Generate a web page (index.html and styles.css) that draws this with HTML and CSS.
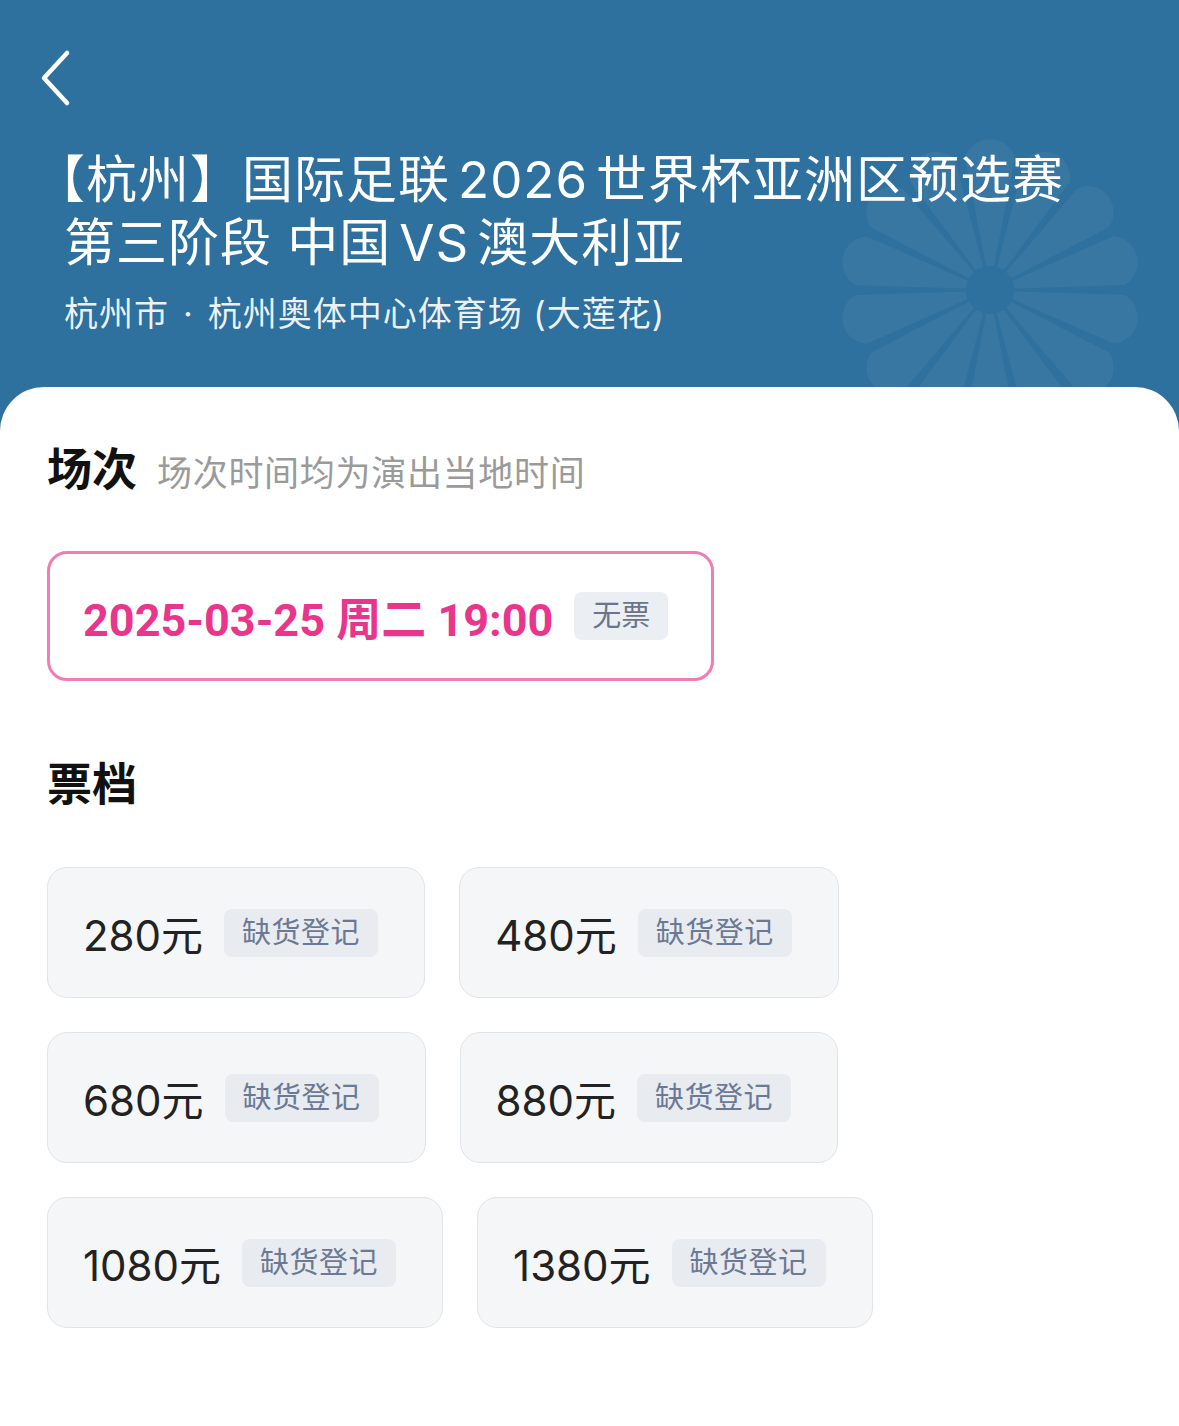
FILE: index.html
```html
<!DOCTYPE html>
<html lang="zh-CN">
<head>
  <meta charset="UTF-8">
  <meta name="viewport" content="width=device-width, initial-scale=1.0">
  <title>杭州 国际足联2026世界杯亚洲区预选赛</title>
  <link rel="stylesheet" href="styles.css">
</head>
<body>
  <div class="page">
    <!-- Top banner with event name -->
    <header class="hero">
      <svg class="lotus" width="380" height="380" viewBox="-190 -190 380 380" aria-hidden="true">
        <g fill="#ffffff" fill-opacity="0.05">
          <path id="petal" d="M-4,-24 L-25,-132 A26,26 0 0 1 25,-132 L4,-24 Z"/>
          <use href="#petal" transform="rotate(25.7)"/>
          <use href="#petal" transform="rotate(51.4)"/>
          <use href="#petal" transform="rotate(77.1)"/>
          <use href="#petal" transform="rotate(102.8)"/>
          <use href="#petal" transform="rotate(128.5)"/>
          <use href="#petal" transform="rotate(154.2)"/>
          <use href="#petal" transform="rotate(180)"/>
          <use href="#petal" transform="rotate(205.7)"/>
          <use href="#petal" transform="rotate(231.4)"/>
          <use href="#petal" transform="rotate(257.1)"/>
          <use href="#petal" transform="rotate(282.8)"/>
          <use href="#petal" transform="rotate(308.5)"/>
          <use href="#petal" transform="rotate(334.2)"/>
        </g>
      </svg>

      <a class="back" href="#" aria-label="返回">
        <svg width="36" height="60" viewBox="0 0 36 60">
          <path d="M31 5 L8 30 L31 55" fill="none" stroke="#ffffff" stroke-width="4.5" stroke-linecap="round" stroke-linejoin="round"/>
        </svg>
      </a>

      <h1 class="title"><span class="open-bracket">【</span>杭州】国际足联<span class="latin">2026</span>世界杯亚洲区预选赛<br>第三阶段 中国<span class="latin">VS</span>澳大利亚</h1>
      <p class="venue">杭州市<span class="dot">·</span>杭州奥体中心体育场 (大莲花)</p>
    </header>

    <main class="sheet">
      <section class="block">
        <div class="block-head">
          <h2>场次</h2>
          <span class="hint">场次时间均为演出当地时间</span>
        </div>
        <div class="session">
          <span class="session-time">2025-03-25 周二 19:00</span>
          <span class="tag">无票</span>
        </div>
      </section>

      <section class="block block-tickets">
        <h2>票档</h2>
        <div class="tickets">
          <div class="ticket"><span class="price">280元</span><span class="tag">缺货登记</span></div>
          <div class="ticket"><span class="price">480元</span><span class="tag">缺货登记</span></div>
          <div class="ticket"><span class="price">680元</span><span class="tag">缺货登记</span></div>
          <div class="ticket"><span class="price">880元</span><span class="tag">缺货登记</span></div>
          <div class="ticket"><span class="price">1080元</span><span class="tag">缺货登记</span></div>
          <div class="ticket"><span class="price">1380元</span><span class="tag">缺货登记</span></div>
        </div>
      </section>
    </main>
  </div>
</body>
</html>
```

FILE: styles.css
```css
/* Ticket page */
body {
  margin: 0;
  font-family: "Inter", "Noto Sans CJK SC", sans-serif;
  background: #ffffff;
  color: #1a1a1a;
}

.page {
  width: 1179px;
  min-height: 1426px;
  background: #ffffff;
  overflow: hidden;
}

/* Banner */
.hero {
  position: relative;
  overflow: hidden;
  background: #2e709e;
  color: #ffffff;
  padding: 48px 40px 95px 64px;
}

.lotus {
  position: absolute;
  left: 800px;
  top: 100px;
}

.back {
  position: relative;
  display: block;
  width: 36px;
  height: 60px;
  margin-left: -28px;
}

.title {
  position: relative;
  margin: 40px 0 0;
  font-size: 51px;
  font-weight: 400;
  line-height: 63px;
  letter-spacing: 1px;
}

.title .latin {
  margin: 0 8px;
}

.open-bracket {
  margin-left: -30px;
}

.venue {
  position: relative;
  margin: 18px 0 0;
  font-size: 34px;
  line-height: 44px;
  letter-spacing: 1px;
  color: rgba(255, 255, 255, 0.92);
}

.venue .dot {
  margin: 0 14px;
}

/* White sheet */
.sheet {
  position: relative;
  margin-top: -44px;
  background: #ffffff;
  border-radius: 44px 44px 0 0;
  padding: 55px 48px 60px 47px;
}

.block h2 {
  margin: 0;
  font-size: 45px;
  line-height: 56px;
  font-weight: 700;
  color: #111111;
}

.block-head {
  display: flex;
  align-items: baseline;
  gap: 20px;
}

.hint {
  font-size: 35px;
  letter-spacing: 0.7px;
  color: #9a9a9a;
}

.session {
  display: inline-flex;
  align-items: center;
  gap: 21px;
  box-sizing: border-box;
  height: 130px;
  margin-top: 53px;
  padding: 0 43px 0 33px;
  border: 3px solid #f27cb4;
  border-radius: 20px;
}

.session-time {
  font-family: "Roboto", "Noto Sans CJK SC", sans-serif;
  font-size: 45px;
  font-weight: 700;
  color: #e9358b;
}

.tag {
  display: inline-block;
  padding: 0 18px;
  height: 48px;
  line-height: 48px;
  font-size: 29px;
  border-radius: 8px;
  background: #ebeef2;
  color: #6b7589;
}

.block-tickets {
  margin-top: 76px;
}

.tickets {
  display: flex;
  flex-wrap: wrap;
  gap: 34px;
  max-width: 900px;
  margin-top: 54px;
}

.ticket {
  display: flex;
  align-items: center;
  gap: 21px;
  box-sizing: border-box;
  height: 131px;
  padding: 0 46px 0 35px;
  background: #f5f6f8;
  border: 1.5px solid #e1e4e8;
  border-radius: 20px;
}

.price {
  font-size: 42px;
  color: #222222;
}

.ticket .tag {
  color: #6c7994;
  background: #e8ecf1;
  letter-spacing: 0.5px;
}
```
